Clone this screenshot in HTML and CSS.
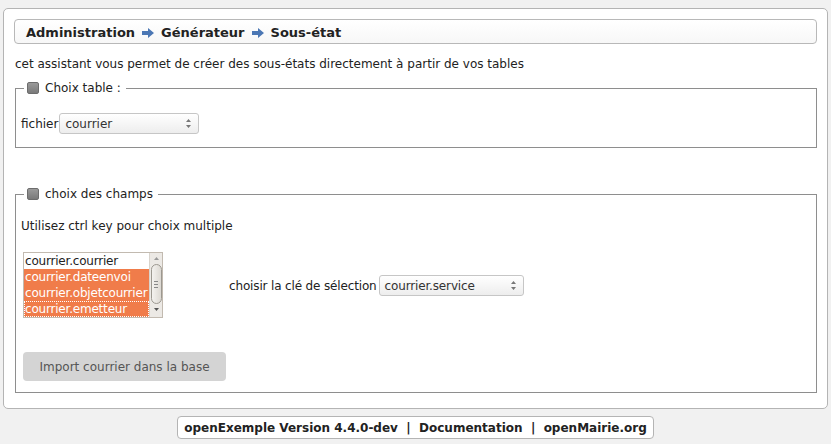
FILE: index.html
```html
<!DOCTYPE html>
<html lang="fr">
<head>
<meta charset="utf-8">
<title>Sous-état</title>
<link rel="stylesheet" href="styles.css">
</head>
<body>
<div class="main">
  <div class="crumb">
    <span>Administration</span>
    <svg class="arrow" width="12" height="10" viewBox="0 0 12 10"><path d="M0 3h6V0l6 5-6 5V7H0z" fill="#4b77b4"/></svg>
    <span>Générateur</span>
    <svg class="arrow" width="12" height="10" viewBox="0 0 12 10"><path d="M0 3h6V0l6 5-6 5V7H0z" fill="#4b77b4"/></svg>
    <span>Sous-état</span>
  </div>
  <p class="intro">cet assistant vous permet de créer des sous-états directement à partir de vos tables</p>

  <fieldset class="fs fs1">
    <legend><span class="chk"></span>Choix table :</legend>
    <div class="row1">
      <span>fichier</span>
      <div class="sel sel1"><span>courrier</span><svg class="ud" width="7" height="11" viewBox="0 0 7 11"><path d="M3.5 1L6 4H1z M3.5 10L6 7H1z" fill="#777"/></svg></div>
    </div>
  </fieldset>

  <fieldset class="fs fs2">
    <legend><span class="chk"></span>choix des champs</legend>
    <p class="hint">Utilisez ctrl key pour choix multiple</p>
    <div class="row2">
      <div class="list">
        <div class="opts">
          <div class="opt">courrier.courrier</div>
          <div class="opt on">courrier.dateenvoi</div>
          <div class="opt on">courrier.objetcourrier</div>
          <div class="opt on focus">courrier.emetteur</div>
        </div>
        <div class="sb">
          <div class="sbb"><svg width="7" height="5" viewBox="0 0 7 5"><path d="M3.5 1L6 4H1z" fill="#999"/></svg></div>
          <div class="thumb"><span></span><span></span><span></span></div>
          <div class="sbb"><svg width="7" height="5" viewBox="0 0 7 5"><path d="M3.5 4L6 1H1z" fill="#555"/></svg></div>
        </div>
      </div>
      <div class="key">
        <span>choisir la clé de sélection</span>
        <div class="sel sel2"><span>courrier.service</span><svg class="ud" width="7" height="11" viewBox="0 0 7 11"><path d="M3.5 1L6 4H1z M3.5 10L6 7H1z" fill="#777"/></svg></div>
      </div>
    </div>
    <div class="btn">Import courrier dans la base</div>
  </fieldset>
</div>
<div class="foot">
  <div class="footbox">openExemple Version 4.4.0-dev &nbsp;|&nbsp; Documentation &nbsp;|&nbsp; openMairie.org</div>
</div>
</body>
</html>
```

FILE: styles.css
```css
* { box-sizing: border-box; }
html, body { margin: 0; padding: 0; }
body {
  background: #f1f1f1;
  font-family: "DejaVu Sans", Verdana, sans-serif;
  font-size: 12px;
  color: #222;
  width: 831px;
  height: 444px;
  overflow: hidden;
}
.main {
  margin: 8px 3px 0 3px;
  height: 401px;
  background: #fff;
  border: 1px solid #b4b4b4;
  border-radius: 5px;
  padding: 10px 10px 0 10px;
}
.crumb {
  height: 25px;
  border: 1px solid #b8b8b8;
  border-radius: 4px;
  background: linear-gradient(#fff, #f7f7f7);
  display: flex;
  align-items: center;
  gap: 7px;
  padding: 2px 0 0 11px;
  font-weight: bold;
  font-size: 13px;
  color: #222;
}
.arrow { margin-top: 0; }
.intro {
  margin: 8px 0 0 1px;
  font-size: 12px;
  line-height: 24px;
}
.fs {
  margin: 0 0 0 1px;
  border: 1px solid #8e8e8e;
  padding: 0 5px;
  min-width: 0;
}
.fs legend {
  margin-left: 3px;
  padding: 0 5px 0 3px;
  display: flex;
  align-items: center;
  font-size: 12px;
  line-height: 14px;
}
.chk {
  width: 12px;
  height: 12px;
  border: 1px solid #6d6d6d;
  border-radius: 2px;
  background: linear-gradient(#9a9a9a, #7a7a7a);
  margin-right: 6px;
}
.fs1 { margin-top: 5px; height: 67px; }
.row1 {
  display: flex;
  align-items: center;
  margin-top: 18px;
}
.sel {
  display: flex;
  align-items: center;
  justify-content: space-between;
  border: 1px solid #c6c6c6;
  border-radius: 3px;
  background: linear-gradient(#fff, #ededed);
  height: 21px;
  padding: 0 6px 0 5px;
  font-size: 12px;
  color: #333;
}
.sel1 { width: 140px; margin-left: 1px; }
.sel2 { width: 145px; margin-left: 2px; }
.fs2 { margin-top: 39px; height: 206px; }
.hint {
  margin: 18px 0 0 0;
  line-height: 14px;
}
.row2 {
  display: flex;
  align-items: center;
  margin-top: 19px;
  margin-left: 2px;
}
.list {
  width: 140px;
  height: 66px;
  border: 1px solid #c2bab0;
  display: flex;
  background: #fff;
}
.opts { flex: 1; overflow: hidden; }
.opt {
  height: 16px;
  line-height: 16px;
  font-size: 12px;
  padding-left: 1px;
  white-space: nowrap;
  color: #222;
  letter-spacing: -0.2px;
}
.opt.on { background: #f07c4a; color: #fff; }
.opt.focus { outline: 1px dotted #fff; outline-offset: -1px; }
.sb {
  width: 13px;
  background: #ece9e5;
  display: flex;
  flex-direction: column;
  align-items: center;
  border-left: 1px solid #d8d3cc;
}
.sbb { height: 11px; display: flex; align-items: center; justify-content: center; }
.thumb {
  width: 11px;
  height: 40px;
  border: 1px solid #9c9890;
  border-radius: 6px;
  background: linear-gradient(90deg, #f4f2ef, #ddd9d3);
  display: flex;
  flex-direction: column;
  align-items: center;
  justify-content: center;
  gap: 2px;
}
.thumb span { width: 4px; height: 1px; background: #888; }
.key {
  display: flex;
  align-items: center;
  margin-left: 66px;
  margin-top: 1px;
  letter-spacing: -0.15px;
}
.btn {
  margin: 34px 0 0 2px;
  width: 203px;
  height: 29px;
  background: #d4d4d4;
  border-radius: 4px;
  color: #555;
  font-size: 12px;
  display: flex;
  align-items: center;
  justify-content: center;
}
.foot {
  display: flex;
  justify-content: center;
  margin-top: 7px;
}
.footbox {
  background: #fff;
  border: 1px solid #b4b4b4;
  border-radius: 4px;
  height: 23px;
  padding: 0 6px;
  display: flex;
  align-items: center;
  font-weight: bold;
  font-size: 12px;
  color: #222;
}
```
